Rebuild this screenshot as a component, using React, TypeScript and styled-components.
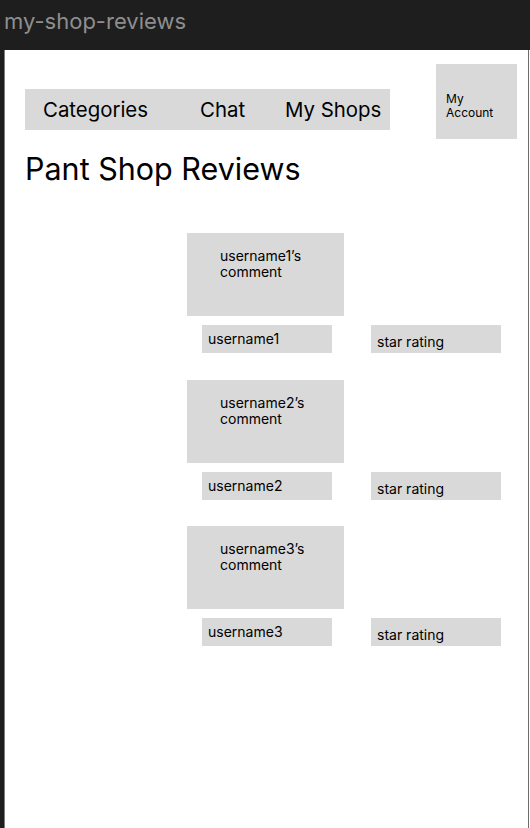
import React from 'react'
import styled, { createGlobalStyle } from 'styled-components'

const GlobalStyle = createGlobalStyle`
  html, body {
    margin: 0;
    padding: 0;
    background: #ffffff;
  }
  body {
    font-family: Inter, "Noto Sans", sans-serif;
    color: #000000;
  }
`

const reviews = [
  { user: 'username1' },
  { user: 'username2' },
  { user: 'username3' },
]

export default function App() {
  return (
    <>
      <GlobalStyle />
      <TitleBar>my-shop-reviews</TitleBar>
      <Frame>
        <TopRow>
          <NavBar>
            <NavItem>Categories</NavItem>
            <NavItem>Chat</NavItem>
            <NavItem>My Shops</NavItem>
          </NavBar>
          <AccountBox>My<br />Account</AccountBox>
        </TopRow>
        <Heading>Pant Shop Reviews</Heading>
        <ReviewList>
          {reviews.map(r => (
            <Review key={r.user}>
              <CommentBox>{r.user}’s<br />comment</CommentBox>
              <MetaRow>
                <MetaBox>{r.user}</MetaBox>
                <MetaBox lower>star rating</MetaBox>
              </MetaRow>
            </Review>
          ))}
        </ReviewList>
      </Frame>
    </>
  )
}

const TitleBar = styled.div`
  height: 50px;
  box-sizing: border-box;
  padding: 8px 0 0 4px;
  background: #1e1e1e;
  color: #8e8e8e;
  font-size: 22px;
  line-height: 27px;
  white-space: nowrap;
`

const Frame = styled.div`
  width: 503px;
  min-height: calc(100vh - 50px);
  margin-left: 4px;
  padding-left: 20px;
  background: #ffffff;
  border-left: 1px solid #7c7c7c;
  border-right: 1px solid #6c6c6c;
  box-shadow: -4px 0 0 #1e1e1e;
`

const TopRow = styled.div`
  display: flex;
  align-items: flex-start;
  padding-top: 14px;
`

const NavBar = styled.nav`
  display: grid;
  grid-template-columns: 157px 85px auto;
  align-items: center;
  width: 365px;
  height: 41px;
  margin-top: 25px;
  padding-left: 18px;
  box-sizing: border-box;
  background: #d9d9d9;
`

const NavItem = styled.span`
  font-size: 20.4px;
  line-height: 24px;
  white-space: nowrap;
`

const AccountBox = styled.div`
  width: 81px;
  height: 75px;
  margin-left: 46px;
  padding: 28px 0 0 10px;
  box-sizing: border-box;
  background: #d9d9d9;
  font-size: 12px;
  line-height: 14px;
`

const Heading = styled.h1`
  margin: 11px 0 0;
  font-size: 30.5px;
  font-weight: 400;
  line-height: 37px;
`

const ReviewList = styled.div`
  display: flex;
  flex-direction: column;
  gap: 26.5px;
  margin-top: 46px;
  padding-left: 162px;
`

const Review = styled.div`
  display: flex;
  flex-direction: column;
  gap: 9px;
`

const CommentBox = styled.div`
  width: 157px;
  height: 83px;
  padding: 15px 0 0 33px;
  box-sizing: border-box;
  background: #d9d9d9;
  font-size: 14px;
  line-height: 16px;
`

const MetaRow = styled.div`
  display: flex;
  gap: 39px;
  padding-left: 15px;
`

const MetaBox = styled.div<{ lower?: boolean }>`
  width: 130px;
  height: 28px;
  padding: ${p => (p.lower ? '9px' : '6px')} 0 0 6px;
  box-sizing: border-box;
  background: #d9d9d9;
  font-size: 14px;
  line-height: 16px;
`
